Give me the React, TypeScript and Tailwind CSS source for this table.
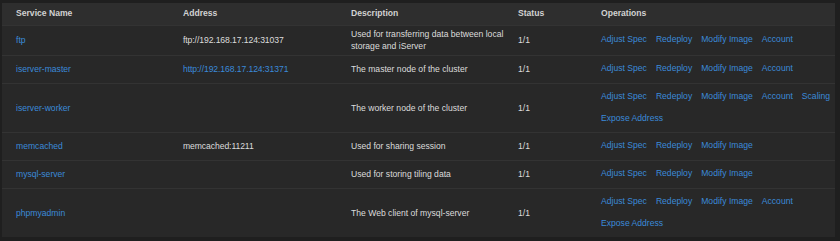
import React from "react";

type Row = {
  name: string;
  address?: string;
  addressLink?: boolean;
  desc: React.ReactNode;
  status: string;
  ops: string[];
};

const rows: Row[] = [
  {
    name: "ftp",
    address: "ftp://192.168.17.124:31037",
    desc: (
      <>
        Used for transferring data between local
        <br />
        storage and iServer
      </>
    ),
    status: "1/1",
    ops: ["Adjust Spec", "Redeploy", "Modify Image", "Account"],
  },
  {
    name: "iserver-master",
    address: "http://192.168.17.124:31371",
    addressLink: true,
    desc: "The master node of the cluster",
    status: "1/1",
    ops: ["Adjust Spec", "Redeploy", "Modify Image", "Account"],
  },
  {
    name: "iserver-worker",
    desc: "The worker node of the cluster",
    status: "1/1",
    ops: ["Adjust Spec", "Redeploy", "Modify Image", "Account", "Scaling", "Expose Address"],
  },
  {
    name: "memcached",
    address: "memcached:11211",
    desc: "Used for sharing session",
    status: "1/1",
    ops: ["Adjust Spec", "Redeploy", "Modify Image"],
  },
  {
    name: "mysql-server",
    desc: "Used for storing tiling data",
    status: "1/1",
    ops: ["Adjust Spec", "Redeploy", "Modify Image"],
  },
  {
    name: "phpmyadmin",
    desc: "The Web client of mysql-server",
    status: "1/1",
    ops: ["Adjust Spec", "Redeploy", "Modify Image", "Account", "Expose Address"],
  },
];

export default function App() {
  return (
    <div
      className="w-[840px] h-[241px] bg-[#1f1f1f] pt-[3px] pl-[2px] pr-[5px] overflow-hidden"
      style={{ fontFamily: '"Liberation Sans", Arial, sans-serif' }}
    >
      <table className="w-[833px] table-fixed border-collapse text-[8.6px] text-[#dcdcdc]">
        <colgroup>
          <col className="w-[167px]" />
          <col className="w-[168px]" />
          <col className="w-[167px]" />
          <col className="w-[83px]" />
          <col />
        </colgroup>
        <thead>
          <tr className="h-[22px] bg-[#2e2e2e] text-left text-[#d2d2d2]">
            <th className="pl-[14px] font-bold">Service Name</th>
            <th className="pl-[14px] font-bold">Address</th>
            <th className="pl-[14px] font-bold">Description</th>
            <th className="pl-[14px] font-bold">Status</th>
            <th className="pl-[14px] font-bold">Operations</th>
          </tr>
        </thead>
        <tbody>
          {rows.map((r) => (
            <tr key={r.name} className="h-[28px] bg-[#282828] border-t border-[#333333]">
              <td className="pl-[14px] py-[2.5px] leading-[12px] text-[#3b8ad9] align-middle">{r.name}</td>
              <td
                className={`pl-[14px] py-[2.5px] leading-[12px] align-middle tracking-[-0.08px] ${
                  r.addressLink ? "text-[#3b8ad9]" : ""
                }`}
              >
                {r.address ?? ""}
              </td>
              <td className="pl-[14px] py-[2.5px] leading-[12px] align-middle whitespace-nowrap">{r.desc}</td>
              <td className="pl-[14px] py-[2.5px] leading-[12px] align-middle">{r.status}</td>
              <td className="pl-[14px] py-[2.5px] align-middle">
                <div className="flex flex-wrap gap-x-[9px] leading-[21.5px] text-[#3b8ad9]">
                  {r.ops.map((o) => (
                    <span key={o} className="whitespace-nowrap">
                      {o}
                    </span>
                  ))}
                </div>
              </td>
            </tr>
          ))}
        </tbody>
      </table>
    </div>
  );
}
